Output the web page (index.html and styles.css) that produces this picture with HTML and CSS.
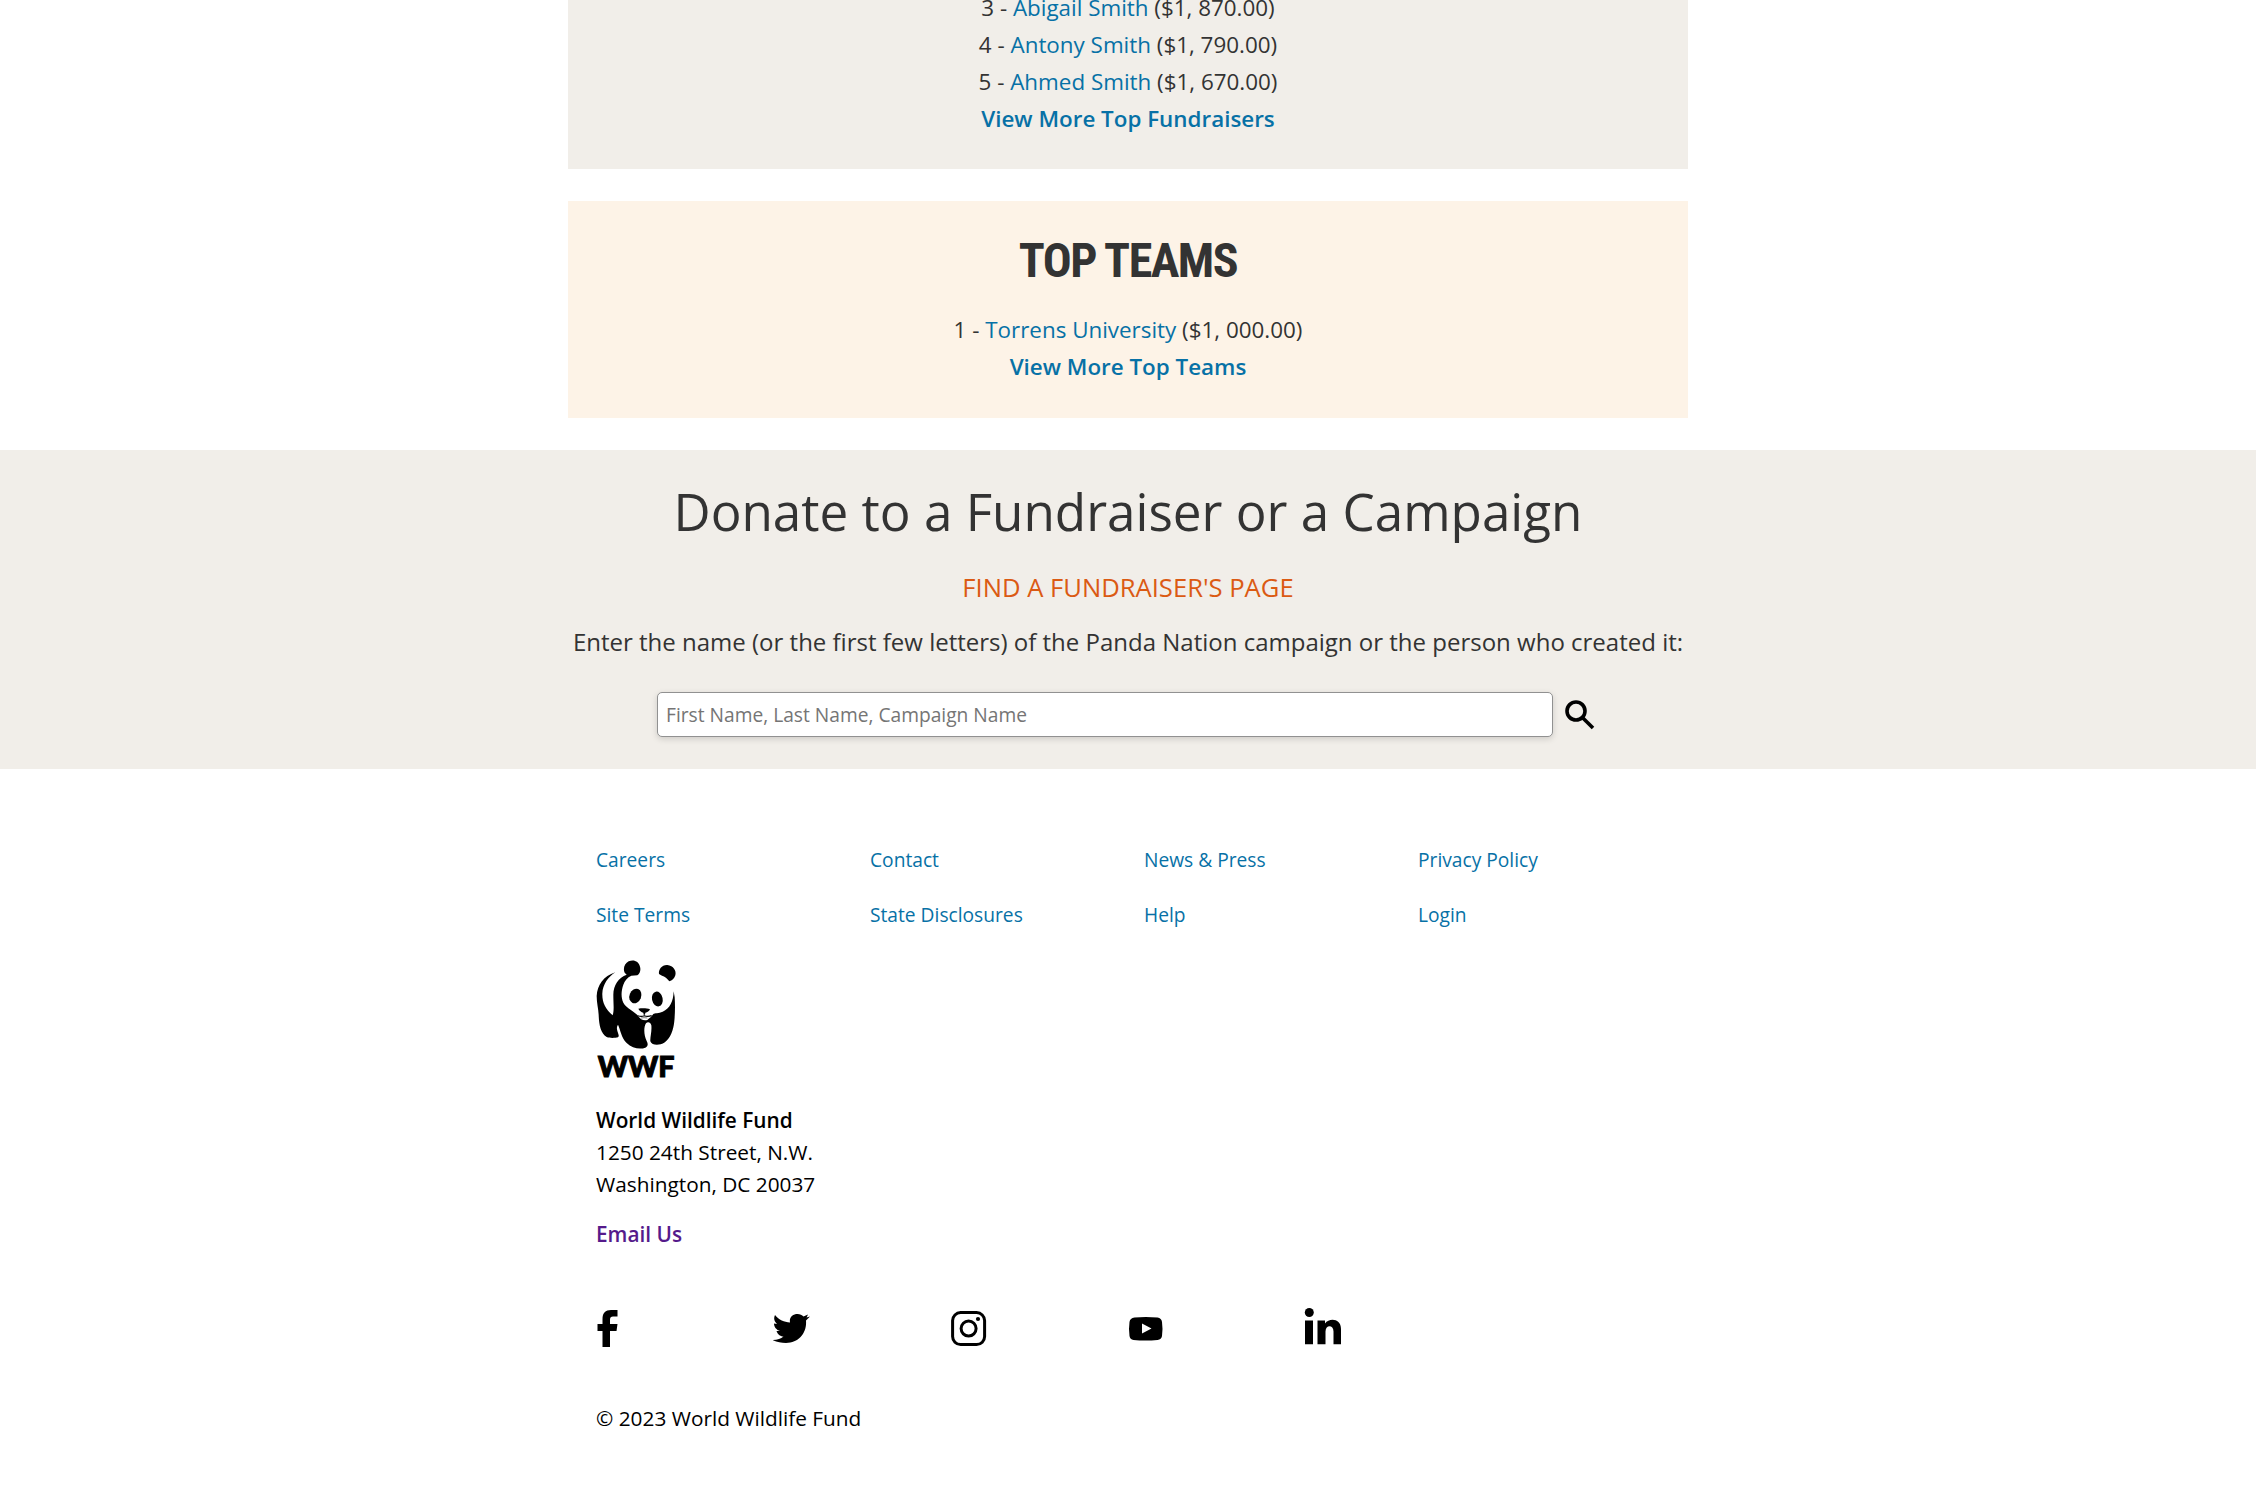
FILE: index.html
```html
<!DOCTYPE html>
<html lang="en">
<head>
<meta charset="utf-8">
<title>Panda Nation</title>
<link rel="stylesheet" href="styles.css">
</head>
<body>
<main class="boards">
  <section class="board board-fundraisers">
    <p class="entry">3 - <a href="#">Abigail Smith</a> ($1, 870.00)</p>
    <p class="entry">4 - <a href="#">Antony Smith</a> ($1, 790.00)</p>
    <p class="entry">5 - <a href="#">Ahmed Smith</a> ($1, 670.00)</p>
    <p class="entry"><a class="more" href="#">View More Top Fundraisers</a></p>
  </section>
  <section class="board board-teams">
    <h2 class="board-title">TOP TEAMS</h2>
    <p class="entry">1 - <a href="#">Torrens University</a> ($1, 000.00)</p>
    <p class="entry"><a class="more" href="#">View More Top Teams</a></p>
  </section>
</main>
<section class="finder">
  <h1 class="finder-title">Donate to a Fundraiser or a Campaign</h1>
  <h3 class="finder-subtitle">FIND A FUNDRAISER'S PAGE</h3>
  <p class="finder-text">Enter the name (or the first few letters) of the Panda Nation campaign or the person who created it:</p>
  <form class="search">
    <input class="search-input" type="text" placeholder="First Name, Last Name, Campaign Name">
    <button class="search-button" type="button" aria-label="Search">
      <svg viewBox="0 0 30 30" width="30" height="30"><circle cx="11" cy="11" r="9" fill="none" stroke="#000" stroke-width="3.6"/><path d="M17.4 17.4 28 28" stroke="#000" stroke-width="3.6"/></svg>
    </button>
  </form>
</section>
<footer class="footer">
  <nav class="links">
    <a href="#">Careers</a><a href="#">Contact</a><a href="#">News &amp; Press</a><a href="#">Privacy Policy</a>
    <a href="#">Site Terms</a><a href="#">State Disclosures</a><a href="#">Help</a><a href="#">Login</a>
  </nav>
  <svg class="logo" viewBox="108 60 243 357" width="81" height="119" role="img" aria-label="WWF">
    <path d="M166 97C130 108 112 136 110 168C110 190 115 205 116 225C117 255 122 280 140 291C150 295 165 294 174 292C180 288 172 278 171 268C170 262 172 257 174 254C182 272 184 292 200 309C216 325 240 329 256 323C264 319 265 312 260 303C252 288 250 262 258 250C264 244 272 248 274 256C276 275 270 290 271 304C274 315 290 315 302 313C320 308 334 290 340 262C345 240 346 200 344 172L341 154C340 185 330 205 308 215C296 221 284 218 280 222C275 228 272 233 266 236L262 240C250 243 240 238 233 226C226 216 200 206 190 188C182 172 184 150 190 134C194 122 202 112 214 107L232 106C240 100 243 90 240 80C236 64 222 58 206 64C194 70 188 86 194 98L200 104C176 112 160 136 160 164C160 190 163 210 158 226C136 208 126 186 127 160C128 134 145 110 166 97Z"/>
    <path d="M297 102C295 88 306 74 322 75C340 77 350 92 346 106C343 116 336 122 328 124C322 116 314 108 306 107Z"/>
    <ellipse cx="226" cy="168" rx="17.5" ry="22.5" transform="rotate(22 226 168)"/>
    <ellipse cx="292" cy="177" rx="16" ry="22.5" transform="rotate(-12 292 177)"/>
    <path d="M235 206C246 204 260 204 270 208C268 214 262 217 256 218L255 224L251 224L250 218C244 216 238 212 235 206Z"/>
    <path d="M234 227Q244 231 253 227Q262 231 275 227" fill="none" stroke="#000" stroke-width="3.5"/>
    <path d="M243 234Q252 232 262 234" fill="none" stroke="#000" stroke-width="1.5"/>
    <text class="logo-text" x="113" y="412" textLength="230" lengthAdjust="spacingAndGlyphs">WWF</text>
  </svg>
  <address class="address">
    <p><strong>World Wildlife Fund</strong></p>
    <p>1250 24th Street, N.W.</p>
    <p>Washington, DC 20037</p>
    <p class="email"><a href="#">Email Us</a></p>
  </address>
  <div class="social">
    <a href="#" aria-label="Facebook"><svg viewBox="0 -1 38 39" width="38" height="39"><path d="M6.500 38V22H1.500V15H6.500V10C6.500 4 9.500 1 15 1H21.500V7.500H17C15 7.500 14 8.500 14 10.500V15H21.500L20.500 22H14V38Z"/></svg></a>
    <a href="#" aria-label="Twitter"><svg viewBox="1 -1 38 39" width="38" height="39"><path d="M3 6C7 11 12 13 18 13.500C17 8 21 5 25.500 5C28 5 30 6 31.500 7.500L36 5.500L34.500 8.500L38 7.500L34 11.500C35 24 27 34 14 34C9 34 5 33 .500 31C5 31 9 30 11.500 27.500C8 27.500 5.500 25 4.500 22H8C4.500 21 2 18 2 14.500L5 15C2 12.500 1.500 9 3 6Z"/></svg></a>
    <a href="#" aria-label="Instagram"><svg viewBox="0 -2 38 39" width="38" height="39"><g fill="none" stroke="#000"><rect x="2.600" y="2.600" width="32" height="32" rx="8" stroke-width="3"/><circle cx="18.600" cy="18.600" r="7.500" stroke-width="3"/></g><circle cx="28" cy="9" r="2.100"/></svg></a>
    <a href="#" aria-label="YouTube"><svg viewBox="-1.500 -2 38 39" width="38" height="39"><path fill-rule="evenodd" d="M6 7.500Q17 6.500 29 7.500Q33 8 33.500 12Q34.500 19 33.500 26Q33 29.500 29 30Q17 31 5 30Q1.500 29.500 1 26Q0 19 1 12Q1.500 8 6 7.500ZM13.500 13.500V23.500L23 18.500Z"/></svg></a>
    <a href="#" aria-label="LinkedIn"><svg viewBox="-.500 0 38 39" width="38" height="39"><circle cx="4.800" cy="4.500" r="4.500"/><path d="M.500 12.500H8.500V36.300H.500ZM13 12.500H20.500V15.500C25 9.500 36.500 10.500 36.500 21V36.300H29V23.500C29 16.500 21 16.500 21 23.500V36.300H13Z"/></svg></a>
  </div>
  <p class="copyright">© 2023 World Wildlife Fund</p>
</footer>
</body>
</html>
```
FILE: styles.css
```css
* { box-sizing: border-box; }
body { margin: 0; background: #fff; color: #333; font-family: "Open Sans", sans-serif; font-size: 22.4px; line-height: 37px; }
h1, h2, h3, p { margin: 0; font-weight: 400; }
a { color: #0771a6; text-decoration: none; }
.boards { width: 1120px; margin: 0 auto; display: flex; flex-direction: column; gap: 32px; text-align: center; }
.board-fundraisers { height: 169px; padding-bottom: 32px; background: #f1eee9; display: flex; flex-direction: column; justify-content: flex-end; }
.entry { flex: none; }
.more { font-weight: 600; }
.board-teams { height: 217px; padding-top: 32px; background: #fdf3e7; }
.board-title { font-family: "Roboto Condensed", Roboto, sans-serif; font-stretch: 75%; font-weight: 700; font-size: 48px; line-height: 56px; letter-spacing: -1.5px; margin-bottom: 22px; }
.finder { margin-top: 32px; height: 319px; padding-top: 24px; background: #f1eee9; text-align: center; display: flex; flex-direction: column; align-items: center; }
.finder-title { font-size: 51.2px; line-height: 74px; }
.finder-subtitle { margin-top: 20px; font-size: 25.6px; line-height: 40px; color: #db5a13; }
.finder-text { margin-top: 15px; font-size: 24px; line-height: 38px; }
.search { margin-top: 31px; margin-left: -4px; display: flex; align-items: center; gap: 12px; }
.search-input { width: 896px; height: 45px; padding: 0 8px; border: 1px solid #919191; border-radius: 5px; font: 19.2px "Open Sans", sans-serif; background: #fff; box-shadow: 0 2px 6px rgba(0,0,0,.15); }
.search-input::placeholder { color: #757575; }
.search-button { padding: 0; border: 0; background: none; width: 30px; height: 30px; }
.search-button svg { display: block; }
.footer { width: 1120px; margin: 0 auto; padding: 72px 28px 0; color: #000; }
.links { display: grid; grid-template-columns: repeat(4, 274px); row-gap: 18px; font-size: 19.2px; }
.logo { display: block; margin-top: 27px; }
.logo-text { font-family: Lato, sans-serif; font-weight: 900; font-size: 84px; stroke: #000; stroke-width: 3px; }
.address { margin-top: 25px; font-style: normal; font-size: 20.8px; line-height: 32px; }
.address strong { font-weight: 600; }
.email { margin-top: 18px; }
.email a { color: #551a8b; font-weight: 600; }
.social { margin-top: 58px; display: grid; grid-template-columns: repeat(5, 177px); }
.social svg { display: block; }
.copyright { margin-top: 53px; font-size: 20.8px; }
```
